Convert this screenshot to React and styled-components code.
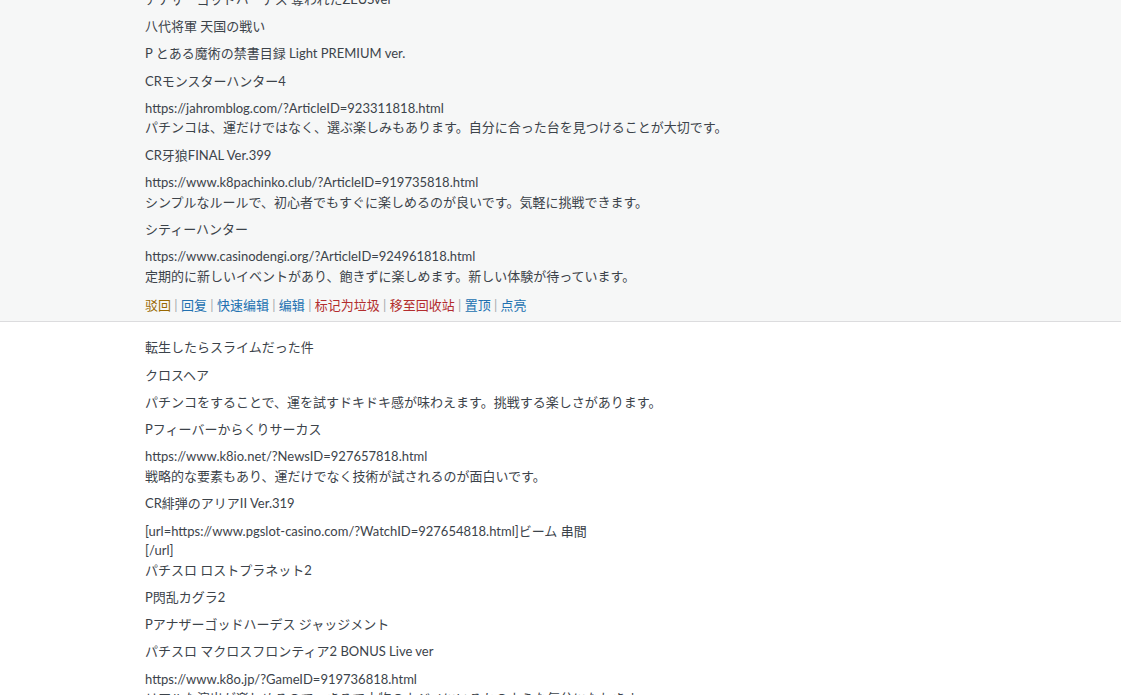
import React from "react";
import styled, { createGlobalStyle } from "styled-components";

const Global = createGlobalStyle`
  html, body { margin: 0; padding: 0; background: #fff; }
  body {
    font-family: Lato, "Noto Sans CJK SC", sans-serif;
    font-size: 13px;
    line-height: 1.5;
    color: #3c434a;
    overflow: hidden;
  }
`;

const Table = styled.div`
  display: flex;
  flex-direction: column;
  margin-top: -26px;
`;

const Row = styled.div`
  display: grid;
  grid-template-columns: 145px 1fr;
  background: ${(p) => (p.$shaded ? "#f6f7f7" : "#ffffff")};
  border-bottom: 1px solid ${(p) => (p.$shaded ? "#dcdcde" : "transparent")};
  padding: ${(p) => (p.$shaded ? "8px 10px 6px 0" : "8px 10px 8px 0")};
`;

const Spacer = styled.div``;

const Cell = styled.div`
  display: block;
`;

const Para = styled.p`
  margin: 0.6em 0;
`;

const Line = styled.span`
  display: block;
`;

const Actions = styled.div`
  padding-top: 2px;
`;

const Action = styled.a`
  color: ${(p) => p.$color};
  text-decoration: none;
`;

const Sep = styled.span`
  color: #a7aaad;
`;

const COLORS = {
  yellow: "#996800",
  blue: "#2271b1",
  red: "#b32d2e",
};

const actions = [
  ["驳回", "yellow"],
  ["回复", "blue"],
  ["快速编辑", "blue"],
  ["编辑", "blue"],
  ["标记为垃圾", "red"],
  ["移至回收站", "red"],
  ["置顶", "blue"],
  ["点亮", "blue"],
];

const first = [
  ["アナザーゴッドハーデス 奪われたZEUSver"],
  ["八代将軍 天国の戦い"],
  ["P とある魔術の禁書目録 Light PREMIUM ver."],
  ["CRモンスターハンター4"],
  [
    "https://jahromblog.com/?ArticleID=923311818.html",
    "パチンコは、運だけではなく、選ぶ楽しみもあります。自分に合った台を見つけることが大切です。",
  ],
  ["CR牙狼FINAL Ver.399"],
  [
    "https://www.k8pachinko.club/?ArticleID=919735818.html",
    "シンプルなルールで、初心者でもすぐに楽しめるのが良いです。気軽に挑戦できます。",
  ],
  ["シティーハンター"],
  [
    "https://www.casinodengi.org/?ArticleID=924961818.html",
    "定期的に新しいイベントがあり、飽きずに楽しめます。新しい体験が待っています。",
  ],
];

const second = [
  ["転生したらスライムだった件"],
  ["クロスヘア"],
  ["パチンコをすることで、運を試すドキドキ感が味わえます。挑戦する楽しさがあります。"],
  ["Pフィーバーからくりサーカス"],
  [
    "https://www.k8io.net/?NewsID=927657818.html",
    "戦略的な要素もあり、運だけでなく技術が試されるのが面白いです。",
  ],
  ["CR緋弾のアリアII Ver.319"],
  [
    "[url=https://www.pgslot-casino.com/?WatchID=927654818.html]ビーム 串間",
    "[/url]",
    "パチスロ ロストプラネット2",
  ],
  ["P閃乱カグラ2"],
  ["Pアナザーゴッドハーデス ジャッジメント"],
  ["パチスロ マクロスフロンティア2 BONUS Live ver"],
  [
    "https://www.k8o.jp/?GameID=919736818.html",
    "リアルな演出が楽しめるので、まるで本物のカジノにいるかのような気分になれます。",
  ],
];

function Paras({ items }) {
  return items.map((lines, i) => (
    <Para key={i}>
      {lines.map((l, j) => (
        <Line key={j}>{l}</Line>
      ))}
    </Para>
  ));
}

export default function App() {
  return (
    <>
      <Global />
      <Table>
        <Row $shaded>
          <Spacer />
          <Cell>
            <Paras items={first} />
            <Actions>
              {actions.map(([label, c], i) => (
                <React.Fragment key={label}>
                  {i > 0 && <Sep> | </Sep>}
                  <Action href="#" $color={COLORS[c]}>
                    {label}
                  </Action>
                </React.Fragment>
              ))}
            </Actions>
          </Cell>
        </Row>
        <Row>
          <Spacer />
          <Cell>
            <Paras items={second} />
          </Cell>
        </Row>
      </Table>
    </>
  );
}
